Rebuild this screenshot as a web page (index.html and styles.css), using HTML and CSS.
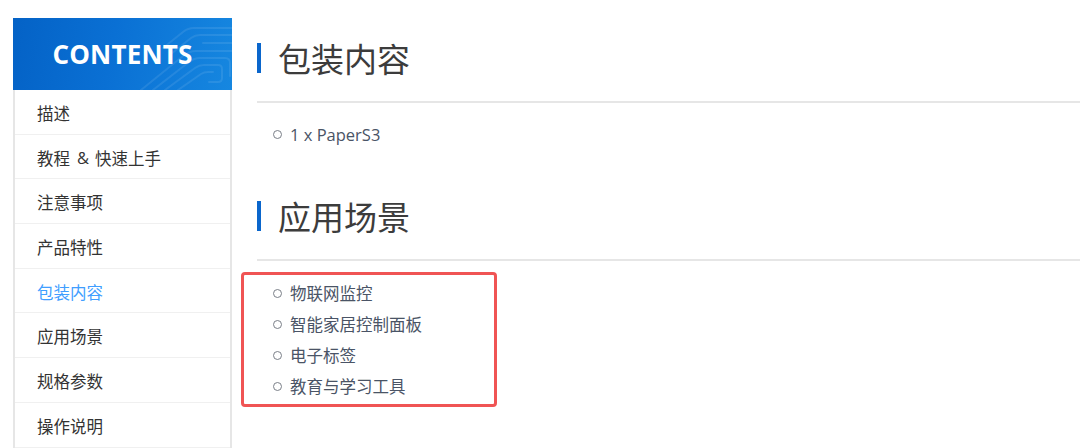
FILE: index.html
```html
<!DOCTYPE html>
<html lang="zh-CN">
<head>
<meta charset="utf-8">
<title>PaperS3</title>
<link rel="stylesheet" href="styles.css">
</head>
<body>
<div class="page">
  <aside class="toc">
    <div class="toc-head">
      <svg class="toc-pattern" width="219" height="72" viewBox="0 0 219 72" aria-hidden="true">
        <g fill="none" stroke="#ffffff" stroke-opacity="0.09" stroke-width="2" stroke-linecap="round" stroke-linejoin="round">
          <path d="M128 72 L170 38 Q176 33 183 33 L219 33"/>
          <path d="M140 72 L176 44 Q181 40 187 40 L212 40 Q217 40 217 45 L217 58"/>
          <path d="M152 72 L182 50 Q186 47 191 47 L205 47 Q209 47 209 51 L209 60 Q209 64 205 64 L196 64"/>
          <path d="M165 72 L188 56 Q191 54 195 54 L200 54"/>
          <path d="M150 30 L170 14 Q175 10 181 10 L219 10"/>
          <path d="M158 36 L178 20 Q182 17 187 17 L219 17"/>
          <path d="M190 25 L219 25"/>
        </g>
      </svg>
      <span class="toc-title">CONTENTS</span>
    </div>
    <ul class="toc-list">
      <li class="toc-item">描述</li>
      <li class="toc-item">教程<span class="amp">&amp;</span>快速上手</li>
      <li class="toc-item">注意事项</li>
      <li class="toc-item">产品特性</li>
      <li class="toc-item active">包装内容</li>
      <li class="toc-item">应用场景</li>
      <li class="toc-item">规格参数</li>
      <li class="toc-item">操作说明</li>
    </ul>
  </aside>

  <main class="content">
    <section class="section">
      <h2 class="section-title">包装内容</h2>
      <ul class="bullets">
        <li>1 x PaperS3</li>
      </ul>
    </section>
    <section class="section">
      <h2 class="section-title">应用场景</h2>
      <div class="highlight">
        <ul class="bullets">
          <li>物联网监控</li>
          <li>智能家居控制面板</li>
          <li>电子标签</li>
          <li>教育与学习工具</li>
        </ul>
      </div>
    </section>
  </main>
</div>
</body>
</html>
```

FILE: styles.css
```css
* { box-sizing: border-box; }

html, body {
  margin: 0;
  padding: 0;
  background: #ffffff;
  overflow: hidden;
}

body {
  font-family: "Noto Sans CJK SC", "Noto Sans", sans-serif;
  width: 1080px;
  height: 448px;
}

.page {
  display: flex;
  align-items: flex-start;
  padding: 18px 0 0 13px;
  gap: 25px;
}

/* ---------- sidebar ---------- */
.toc {
  width: 219px;
  flex: none;
}

.toc-head {
  position: relative;
  height: 72px;
  display: flex;
  align-items: center;
  justify-content: center;
  background: linear-gradient(100deg, #0462c6 0%, #0a70d4 45%, #1687e0 100%);
  overflow: hidden;
}

.toc-pattern {
  position: absolute;
  left: 0;
  top: 0;
}

.toc-title {
  position: relative;
  color: #ffffff;
  font-family: "Open Sans", "Noto Sans", sans-serif;
  font-weight: 700;
  font-size: 26px;
  letter-spacing: 0.2px;
}

.toc-list {
  list-style: none;
  margin: 0;
  padding: 0;
  border-left: 2px solid #e6e6e6;
  border-right: 2px solid #e6e6e6;
}

.toc-item {
  height: 44.7px;
  display: flex;
  align-items: center;
  padding: 2px 0 0 22px;
  border-bottom: 1px solid #f0f0f0;
  font-size: 16.5px;
  color: #333333;
}

.toc-item .amp {
  margin: 0 6px 0 7px;
  font-family: "Open Sans", sans-serif;
}

.toc-item.active {
  color: #409eff;
}

/* ---------- content ---------- */
.content {
  flex: 1;
  padding-top: 20px;
}

.section + .section {
  margin-top: 46px;
}

.section-title {
  margin: 0;
  display: flex;
  align-items: center;
  height: 65px;
  padding-bottom: 23px;
  border-bottom: 2px solid #e6e6e6;
  font-size: 33px;
  line-height: 40px;
  font-weight: 400;
  color: #3c3c3c;
}

.section-title::before {
  content: "";
  width: 4px;
  height: 30px;
  margin-right: 17px;
  background: #0a66cc;
  flex: none;
}

.bullets {
  list-style: none;
  margin: 16px 0 0;
  padding: 0;
}

.bullets li {
  display: flex;
  align-items: center;
  height: 31px;
  font-size: 16.5px;
  color: #4a5466;
  font-family: "Open Sans", "Noto Sans CJK SC", sans-serif;
}

.bullets li::before {
  content: "";
  width: 7px;
  height: 7px;
  border: 1.5px solid #7a7f88;
  border-radius: 50%;
  margin: 0 8px 0 16px;
  flex: none;
}

.highlight {
  width: 256px;
  margin: 11px 0 0 -16px;
  padding: 2.5px 0 2.5px 13px;
  border: 3px solid #f05454;
  border-radius: 4px;
}

.highlight .bullets {
  margin: 0;
}

.highlight .bullets li {
  font-family: "Noto Sans CJK SC", sans-serif;
}
```
